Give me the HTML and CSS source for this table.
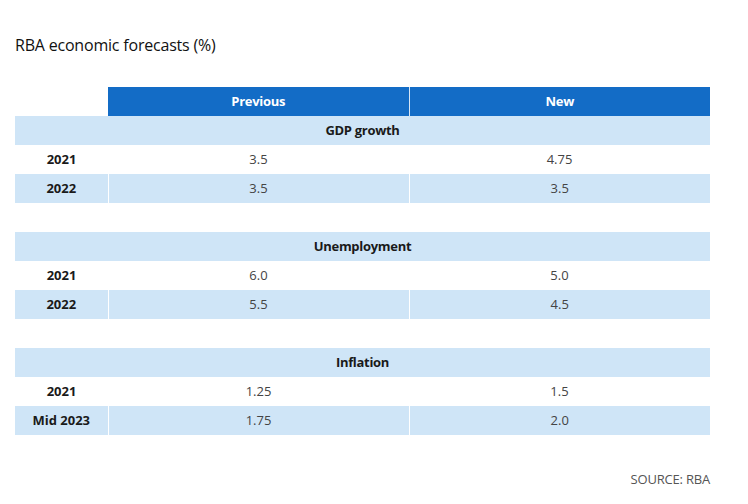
FILE: index.html
```html
<!DOCTYPE html>
<html>
<head>
<meta charset="utf-8">
<link rel="stylesheet" href="styles.css">
</head>
<body>
<div class="page">
  <h1 class="title">RBA economic forecasts (%)</h1>
  <table class="grid">
    <colgroup><col class="c-label"><col class="c-val"><col class="c-val"></colgroup>
    <thead>
      <tr class="head"><th class="blank"></th><th>Previous</th><th class="sep">New</th></tr>
    </thead>
    <tbody>
      <tr class="cat"><td colspan="3">GDP growth</td></tr>
      <tr><td class="lbl">2021</td><td>3.5</td><td>4.75</td></tr>
      <tr class="alt"><td class="lbl">2022</td><td class="sep">3.5</td><td class="sep">3.5</td></tr>
      <tr class="gap"><td colspan="3"></td></tr>
      <tr class="cat"><td colspan="3">Unemployment</td></tr>
      <tr><td class="lbl">2021</td><td>6.0</td><td>5.0</td></tr>
      <tr class="alt"><td class="lbl">2022</td><td class="sep">5.5</td><td class="sep">4.5</td></tr>
      <tr class="gap"><td colspan="3"></td></tr>
      <tr class="cat"><td colspan="3">Inflation</td></tr>
      <tr><td class="lbl">2021</td><td>1.25</td><td>1.5</td></tr>
      <tr class="alt"><td class="lbl">Mid 2023</td><td class="sep">1.75</td><td class="sep">2.0</td></tr>
    </tbody>
  </table>
  <div class="source">SOURCE: RBA</div>
</div>
</body>
</html>
```
FILE: styles.css
```css
html, body { margin: 0; padding: 0; background: #fff; }
body { font-family: "Open Sans", "Liberation Sans", sans-serif; color: #222; }
.page { padding: 34px 38px 0 15px; width: 695px; }
.title { margin: 0 0 31px 0; font-size: 16px; font-weight: 400; line-height: 22px; color: #111; letter-spacing: -0.2px; }
.grid { border-collapse: collapse; border-spacing: 0; width: 695px; table-layout: fixed; }
.c-label { width: 93px; }
.c-val { width: 301px; }
.grid th, .grid td { height: 29px; padding: 0; text-align: center; font-size: 13px; line-height: 29px; box-sizing: border-box; color: #444; font-weight: 400; }
.grid .head th { background: #136cc6; color: #fff; font-weight: 700; letter-spacing: -0.3px; }
.grid .head th.blank { background: #fff; }
.grid .head th.sep { border-left: 1px solid #d7e6f5; }
.grid .cat td { background: #cfe5f7; font-weight: 700; color: #1a1a1a; letter-spacing: -0.3px; }
.grid td.lbl { font-weight: 700; color: #1a1a1a; }
.grid .alt td { background: #cfe5f7; }
.grid .alt td.sep { border-left: 1px solid #fff; }
.grid .gap td { background: #fff; }
.source { margin-top: 35px; text-align: right; font-size: 13px; color: #555; line-height: 18px; letter-spacing: -0.2px; }
```
